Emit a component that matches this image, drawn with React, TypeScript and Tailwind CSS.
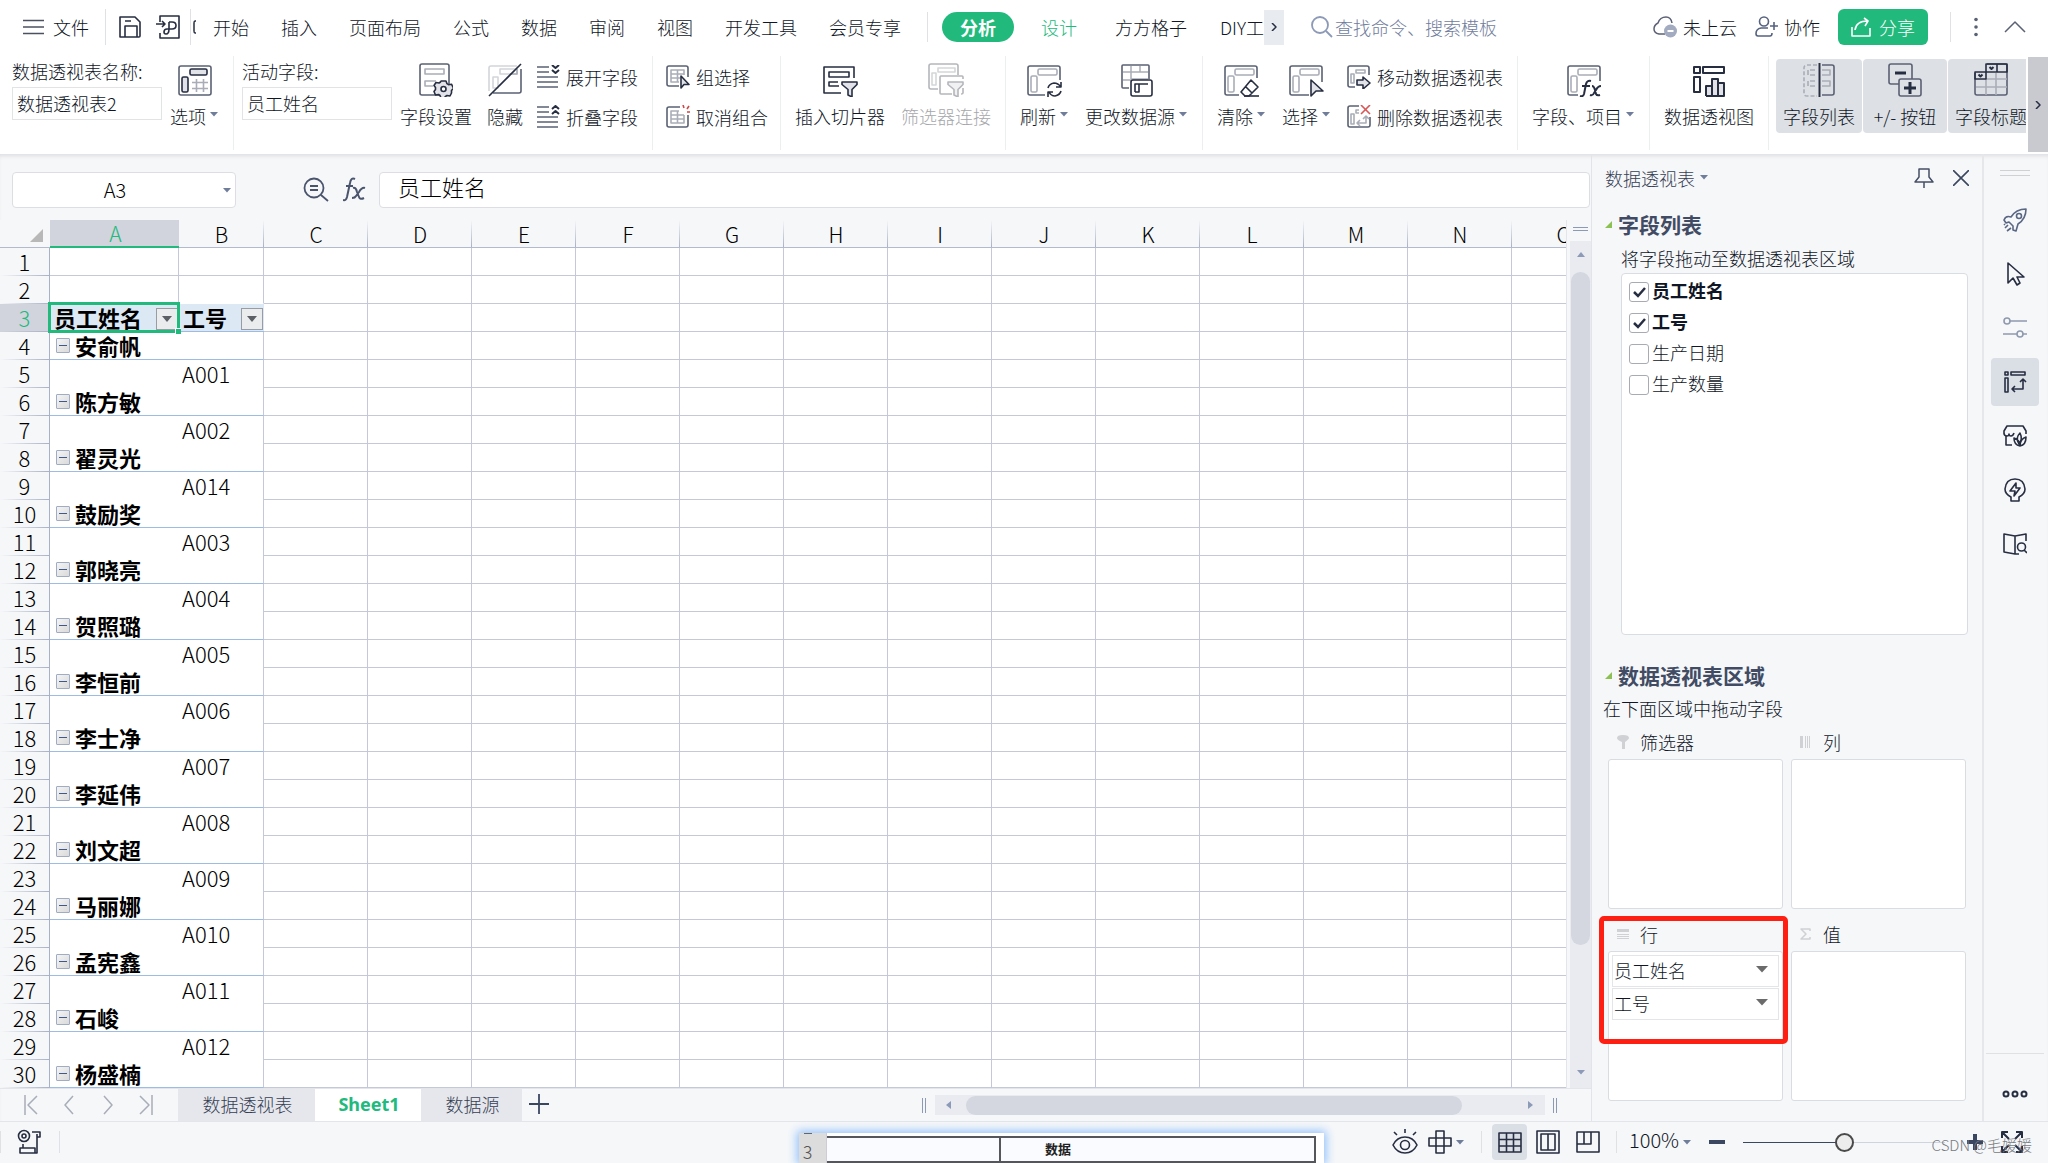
import React, { useState } from "react";

const DARK = "#272e42";
const MID = "#5b6174";
const LIGHT = "#aaadb7";
const FILL = "#e1e3e8";

type IconProps = { w?: number; h?: number; children: React.ReactNode; color?: string; sw?: number; className?: string };

function Icon({ w = 24, h = 24, children, color = DARK, sw = 1.6, className = "" }: IconProps) {
  return (
    <svg
      width={w}
      height={h}
      viewBox={`0 0 ${w} ${h}`}
      fill="none"
      stroke={color}
      strokeWidth={sw}
      strokeLinejoin="round"
      className={"shrink-0 " + className}
      aria-hidden="true"
    >
      {children}
    </svg>
  );
}

function Caret({ color = "#6f7d9b", className = "" }: { color?: string; className?: string }) {
  return (
    <svg width="8" height="5" viewBox="0 0 8 5" className={"shrink-0 " + className} aria-hidden="true">
      <path d="M0 0h8L4 4.5z" fill={color} />
    </svg>
  );
}

/* ---------- ribbon icons ---------- */

const icons = {
  options: (
    <Icon w={34} h={34}>
      <rect x="1" y="3" width="32" height="29" rx="2" stroke={MID} fill="#fff" />
      <rect x="12" y="6" width="17" height="6" rx="1.5" fill={FILL} />
      <rect x="4" y="14" width="6" height="15" rx="1.5" fill={FILL} />
      <path d="M18.500 16v13M25.500 16v13M14 19.500h16M14 25.500h16" stroke={LIGHT} />
    </Icon>
  ),
  fieldSettings: (
    <Icon w={34} h={34}>
      <rect x="1" y="1" width="29" height="31" rx="2" stroke={MID} fill="#fff" />
      <rect x="6" y="6" width="19" height="5" stroke={LIGHT} />
      <path d="M17 18H6v5h8" stroke={LIGHT} />
      <path
        d="M22 18h5l1 2.700 1.500 1 3-.5 2 4-2 2.300v1l0 1.500-1.500 3-3-.5-1.500 1-1.500 1.500h-3l-1-2.500-1.500-1-3 .5-1.500-3.500 1.500-2v-2l-1.500-2 2-3 3 .5 1.500-1z"
        fill={FILL}
      />
      <circle cx="24.500" cy="26" r="2.500" fill="#fff" />
    </Icon>
  ),
  hide: (
    <Icon w={34} h={34}>
      <path d="M1 28V5q0-2 2-2h26" stroke="#d3d5da" />
      <path d="M33 6v22q0 2-2 2H5" stroke={MID} />
      <rect x="12" y="6" width="17" height="5" stroke="#d3d5da" />
      <rect x="5" y="14" width="5" height="11" stroke="#d3d5da" />
      <path d="M22 11h7V6" stroke={LIGHT} />
      <path d="M1 33L33 1" />
    </Icon>
  ),
  expand: (
    <Icon>
      <path d="M1 2h12M1 7h12M1 12h21M1 17h21M1 22h21" stroke={MID} />
      <path d="M16 0l3.500 3L23 0M16 5l3.500 3L23 5" strokeWidth="2" />
    </Icon>
  ),
  collapse: (
    <Icon>
      <path d="M1 2h12M1 7h12M1 12h21M1 17h21M1 22h21" stroke={MID} />
      <path d="M16 4l3.500-3L23 4M16 9l3.500-3L23 9" strokeWidth="2" />
    </Icon>
  ),
  group: (
    <Icon>
      <path d="M13 21H3q-2 0-2-2V3q0-2 2-2h17q2 0 2 2v9" stroke={MID} />
      <path d="M13 17H5V5h13v5M5 9h13M5 13h9M11.500 5v12" stroke={LIGHT} />
      <path d="M15 11v12l3-3.500h5z" fill={FILL} />
    </Icon>
  ),
  ungroup: (
    <Icon>
      <path d="M14 2H3q-2 0-2 2v16q0 2 2 2h17q2 0 2-2V10" stroke={MID} />
      <path d="M13 6H5v12h13v-8M5 10h13M5 14h13M11.500 6v12" stroke={LIGHT} />
      <path d="M17 0l1 3M23 1l-2 3M21 7h3" stroke="#d04848" />
    </Icon>
  ),
  slicer: (
    <Icon w={36} h={34}>
      <path d="M19 30H2V4h30v11" />
      <rect x="7" y="9" width="20" height="5" />
      <path d="M16 19H7v4h10" />
      <path d="M20 19h15v2.500l-5 5V34l-4-2v-5.500l-6-5z" fill={FILL} />
    </Icon>
  ),
  filterLink: (
    <Icon w={36} h={34} color="#b4b6bb">
      <path d="M10 26H3q-2 0-2-2V3q0-2 2-2h25q2 0 2 2v9" />
      <rect x="10" y="5" width="17" height="4" stroke="#d5d6d9" />
      <rect x="4" y="10" width="4" height="12" stroke="#d5d6d9" />
      <path d="M24 31H13q-1 0-1-1V14q0-1 1-1h21q1 0 1 1v2M35 25v5q0 1-2 1" />
      <path d="M20 19h15v2.500l-5 5V34l-4-2v-5.500l-6-5z" fill="#f1f1f3" />
    </Icon>
  ),
  refresh: (
    <Icon w={36} h={34}>
      <path d="M18 32H3q-2 0-2-2V5q0-2 2-2h28q2 0 2 2v12" stroke={MID} />
      <rect x="11" y="6" width="19" height="6" rx="1.500" stroke={LIGHT} />
      <rect x="4" y="13" width="6" height="16" rx="1.500" stroke={LIGHT} />
      <path d="M21 25q1-4 6-5 4 0 7 4M34 19v5h-5M34 28q-1 4-6 5-4 0-6-4M21 34v-5h5" />
    </Icon>
  ),
  changeSource: (
    <Icon w={34} h={34}>
      <path d="M9 25H3q-1 0-1-1V3q0-1 1-1h25q1 0 1 1v13" stroke={MID} />
      <path d="M3 9h25M3 17h8M11 3v13M20 3v6M11 16h17" stroke={LIGHT} strokeWidth="1.500" />
      <rect x="11" y="17" width="21" height="16" rx="2" fill="#fff" />
      <path d="M15 29v-8h13M19 21v8h-4" />
    </Icon>
  ),
  clear: (
    <Icon w={36} h={34}>
      <path d="M15 32H3q-2 0-2-2V5q0-2 2-2h28q2 0 2 2v10" stroke={MID} />
      <rect x="11" y="6" width="19" height="6" rx="1.500" stroke={LIGHT} />
      <rect x="4" y="13" width="6" height="16" rx="1.500" stroke={LIGHT} />
      <path d="M27 17l7 7-9 9h-4l-4-4zM21 23l7 7" fill="#fff" />
      <path d="M20 33h15" />
    </Icon>
  ),
  select: (
    <Icon w={36} h={34}>
      <path d="M20 32H3q-2 0-2-2V5q0-2 2-2h28q2 0 2 2v14" stroke={MID} />
      <rect x="11" y="6" width="19" height="6" rx="1.500" stroke={LIGHT} />
      <rect x="4" y="13" width="6" height="16" rx="1.500" stroke={LIGHT} />
      <path d="M22 17v16l5-5h7z" fill={FILL} />
    </Icon>
  ),
  move: (
    <Icon>
      <path d="M8 22H3q-2 0-2-2V3q0-2 2-2h17q2 0 2 2v7" stroke={MID} />
      <path d="M9 5h9v3H9zM4 9h3v9H4z" stroke={LIGHT} />
      <path d="M10 15h6v-3l7 6-7 6v-4h-6z" fill={FILL} />
    </Icon>
  ),
  remove: (
    <Icon>
      <path d="M12 1H3q-2 0-2 2v17q0 2 2 2h18q2 0 2-2V12" stroke={MID} />
      <path d="M12 5H9v3h3M4 9h3v10H4z" stroke={LIGHT} />
      <path d="M19 12v6h-8M16 14l3-3 3 3M13 15l-3 3 3 3" stroke={LIGHT} />
      <path d="M14 0l9 9M23 0l-9 9" stroke="#d95757" />
    </Icon>
  ),
  fieldItems: (
    <Icon w={34} h={34}>
      <path d="M11 32H3q-2 0-2-2V5q0-2 2-2h28q2 0 2 2v13" stroke={MID} />
      <rect x="11" y="6" width="19" height="6" rx="1.500" stroke={LIGHT} />
      <rect x="4" y="13" width="6" height="16" rx="1.500" stroke={LIGHT} />
      <path
        d="M24 18q-4-1-5 3l-2 10q-1 3-4 2M15 23h8M25 23q2 0 3 4l1 4q1 2 4 1M34 23q-3 0-5 4l-2 3q-1 3-4 2"
        strokeWidth="2"
      />
    </Icon>
  ),
  pivotChart: (
    <Icon w={34} h={34} sw={2}>
      <rect x="2" y="4" width="6" height="6" />
      <rect x="11" y="4" width="21" height="6" />
      <rect x="2" y="14" width="6" height="15" />
      <path d="M14 33V23h6v10M20 33V16h6v17M26 33V20h6v13zM14 33h18" fill={FILL} />
    </Icon>
  ),
  fieldList: (
    <Icon w={34} h={34}>
      <path d="M15 2H5Q2 2 2 5v25q0 3 3 3h10" stroke={LIGHT} strokeDasharray="4 2" />
      <path d="M20 2h10q2 0 2 2v26q0 2-2 2H20" stroke={MID} />
      <path d="M13 7H6v5h7M13 18H6v5h7" stroke={LIGHT} strokeDasharray="5 2" />
      <path d="M20 7h8v5h-8M20 18h8v5h-8" stroke={LIGHT} />
      <path d="M17.500 0v34" strokeWidth="2" />
    </Icon>
  ),
  plusMinus: (
    <Icon w={34} h={34}>
      <rect x="1" y="1" width="23" height="20" rx="2" stroke={MID} />
      <path d="M7 10h11" strokeWidth="3" />
      <rect x="11" y="16" width="22" height="17" rx="2" stroke={MID} fill="#dde1e5" />
      <path d="M16 25h12M22 19v12" strokeWidth="3" />
    </Icon>
  ),
  fieldTitle: (
    <Icon w={34} h={34}>
      <path d="M1 10v20q0 2 2 2h28q2 0 2-2V3q0-2-2-2H13" stroke={MID} />
      <path d="M12 16v16M22 10v22M2 24h31M12 16h21" stroke={LIGHT} />
      <rect x="1" y="9" width="11" height="7" />
      <path d="M12 9V1h11v8zM23 1h10v8H23z" />
      <path d="M15.500 4l2 2 2-2M4.500 11.500l2 2 2-2" strokeWidth="2" />
    </Icon>
  ),
};

type IconName = keyof typeof icons;

function BigButton({
  icon,
  label,
  caret = false,
  disabled = false,
  active = false,
  wide = "",
}: {
  icon: IconName;
  label: string;
  caret?: boolean;
  disabled?: boolean;
  active?: boolean;
  wide?: string;
}) {
  return (
    <button
      type="button"
      disabled={disabled}
      aria-pressed={active || undefined}
      className={
        "flex shrink-0 flex-col items-center gap-[7px] whitespace-nowrap " +
        (active ? "mt-[3px] h-[74px] rounded bg-[#dde1e5] pt-1 " : "pt-[7px] ") +
        (disabled ? "text-[#a6a7ab] " : "") +
        wide
      }
    >
      {icons[icon]}
      <span className="flex h-6 items-center leading-6">
        {label}
        {caret && <Caret className="mr-px mb-1 ml-1" />}
      </span>
    </button>
  );
}

function SmallButton({ icon, label }: { icon: IconName; label: string }) {
  return (
    <button type="button" className="flex h-6 items-center gap-1.5 whitespace-nowrap leading-6">
      {icons[icon]}
      <span>{label}</span>
    </button>
  );
}

function Group({ children, className = "" }: { children: React.ReactNode; className?: string }) {
  return <div className={"flex shrink-0 items-start border-r border-[#eceef0] " + className}>{children}</div>;
}

function RibbonField({ id, label, value }: { id: string; label: string; value: string }) {
  return (
    <div className="flex w-[150px] flex-col gap-1 pt-[3px]">
      <label htmlFor={id} className="h-6 whitespace-nowrap leading-6">
        {label}
      </label>
      <input
        id={id}
        defaultValue={value}
        className="h-[33px] w-full border border-[#e1e3e5] bg-white px-1 pb-0.5 outline-none"
      />
    </div>
  );
}

/* ---------- top bar ---------- */

const tabs = ["开始", "插入", "页面布局", "公式", "数据", "审阅", "视图", "开发工具", "会员专享"];

function TopBar() {
  return (
    <header className="flex h-14 shrink-0 items-center bg-white pr-[22px] pb-0.5 pl-[23px]">
      <button type="button" className="flex items-center gap-2 whitespace-nowrap">
        <Icon w={22} h={18} color="#4b5160" sw={1.5}>
          <path d="M0 2.500h21M0 9h21M0 15.500h21" />
        </Icon>
        文件
      </button>
      <span className="ml-4 h-9 w-px bg-[#dfe1e5]" />
      <button type="button" aria-label="保存" className="ml-3">
        <Icon>
          <path d="M2 2h15l5 5v14q0 1-1 1H2z" />
          <path d="M7 22V11h12v11M7 6h6" />
        </Icon>
      </button>
      <button type="button" aria-label="输出为PDF" className="ml-3.5">
        <Icon>
          <path d="M4 7V1h19v22H4v-5M0 9h9M6 6l3 3-3 3M13 7v7M13 7h3q4 0 4 3.500t-4 3.500h-5q-3 0-3 3M8 17q0 2 2 2 3 0 3-5" />
        </Icon>
      </button>
      <span className="ml-2.5 h-9 w-px bg-[#dfe1e5]" />
      <Icon w={4} h={14} className="ml-px" sw={1.5}>
        <path d="M4 1H3Q2 1 2 3v8q0 2 1 2h1" />
      </Icon>
      <nav className="ml-[17px] flex items-center gap-8 whitespace-nowrap">
        {tabs.map((t) => (
          <button type="button" key={t}>
            {t}
          </button>
        ))}
      </nav>
      <span className="ml-[26px] h-[30px] w-px bg-[#dfe1e5]" />
      <button type="button" className="ml-3.5 h-[30px] w-[72px] shrink-0 rounded-full bg-[#21ba7c] leading-7 font-bold text-white">
        分析
      </button>
      <button type="button" className="ml-[27px] whitespace-nowrap text-[#21ba7c]">
        设计
      </button>
      <button type="button" className="ml-[38px] whitespace-nowrap">
        方方格子
      </button>
      <button type="button" className="ml-[33px] w-11 shrink-0 overflow-hidden text-left whitespace-nowrap">
        DIY工
      </button>
      <button type="button" aria-label="更多选项卡" className="flex h-[35px] w-5 shrink-0 items-center justify-center bg-[#e8ebf0]">
        <Icon w={6} h={8} sw={1.5}>
          <path d="M1 0l4 4-4 4" />
        </Icon>
      </button>
      <label className="ml-[27px] flex items-center gap-0.5">
        <Icon w={22} h={22} color="#8c9ab8" sw={1.8}>
          <circle cx="9" cy="9" r="8" />
          <path d="M15 15l6 6" />
        </Icon>
        <input
          aria-label="查找命令、搜索模板"
          placeholder="查找命令、搜索模板"
          className="w-[200px] outline-none placeholder:text-[#6f7c9c] placeholder:opacity-100"
        />
      </label>
      <div className="ml-auto flex items-center whitespace-nowrap">
        <button type="button" className="flex items-center gap-1.5">
          <Icon color={MID} sw={1.5}>
            <path d="M12 19H6q-5-1-5-5t4-6q2-6 8-6 5 0 6 6" />
            <circle cx="17.500" cy="16" r="6.500" fill="#a3abc0" stroke="none" />
            <path d="M14.500 16h6" stroke="#fff" strokeWidth="2" />
          </Icon>
          未上云
        </button>
        <button type="button" className="ml-[18px] flex items-center gap-[5px]">
          <Icon color="#56627f">
            <circle cx="9" cy="6.500" r="4.500" />
            <path d="M13 13H6q-5 1-5 5.500Q1 21 3 21h12q2 0 2-3M15 11h8M19 7v8" />
          </Icon>
          协作
        </button>
        <button
          type="button"
          className="ml-[18px] flex h-9 w-[90px] items-center justify-center gap-2 rounded-md bg-[#21ba7c] text-white"
        >
          <Icon w={20} h={20} color="#fff">
            <path d="M1 10v9h18v-8M4 13q1-9 13-9M13 1l4 3-3 5" />
          </Icon>
          分享
        </button>
        <span className="ml-[22px] h-[30px] w-px bg-[#dfe1e5]" />
        <button type="button" aria-label="更多" className="ml-[22px]">
          <svg width="6" height="20" viewBox="0 0 6 20" fill={MID} aria-hidden="true">
            <circle cx="3" cy="2.500" r="1.800" />
            <circle cx="3" cy="10" r="1.800" />
            <circle cx="3" cy="17.500" r="1.800" />
          </svg>
        </button>
        <button type="button" aria-label="收起功能区" className="ml-[25px]">
          <Icon w={22} h={12} color={MID} sw={1.5}>
            <path d="M1 11L11 1l10 10" />
          </Icon>
        </button>
      </div>
    </header>
  );
}

function Ribbon() {
  return (
    <div className="flex h-[98px] shrink-0 bg-white">
      <div className="mr-0.5 flex h-[94px] min-w-0 flex-1 overflow-hidden">
        <Group className="gap-2 pr-3.5 pl-3">
          <RibbonField id="pivot-name" label="数据透视表名称:" value="数据透视表2" />
          <BigButton icon="options" label="选项" caret />
        </Group>
        <Group className="gap-2 pr-3.5 pl-2">
          <RibbonField id="active-field" label="活动字段:" value="员工姓名" />
          <BigButton icon="fieldSettings" label="字段设置" />
          <BigButton icon="hide" label="隐藏" wide="ml-[7px]" />
          <div className="ml-[5px] flex flex-col gap-4 pt-[9px]">
            <SmallButton icon="expand" label="展开字段" />
            <SmallButton icon="collapse" label="折叠字段" />
          </div>
        </Group>
        <Group className="pr-3 pl-[13px]">
          <div className="flex flex-col gap-4 pt-[9px]">
            <SmallButton icon="group" label="组选择" />
            <SmallButton icon="ungroup" label="取消组合" />
          </div>
        </Group>
        <Group className="gap-4 px-3.5">
          <BigButton icon="slicer" label="插入切片器" />
          <BigButton icon="filterLink" label="筛选器连接" disabled />
        </Group>
        <Group className="gap-4 px-3.5">
          <BigButton icon="refresh" label="刷新" caret />
          <BigButton icon="changeSource" label="更改数据源" caret />
        </Group>
        <Group className="gap-4 px-3.5">
          <BigButton icon="clear" label="清除" caret />
          <BigButton icon="select" label="选择" caret />
          <div className="flex flex-col gap-4 pt-[9px]">
            <SmallButton icon="move" label="移动数据透视表" />
            <SmallButton icon="remove" label="删除数据透视表" />
          </div>
        </Group>
        <Group className="px-3.5">
          <BigButton icon="fieldItems" label="字段、项目" caret />
        </Group>
        <Group className="px-3.5">
          <BigButton icon="pivotChart" label="数据透视图" />
        </Group>
        <div className="flex shrink-0 items-start gap-px pl-[7px]">
          <BigButton icon="fieldList" label="字段列表" active wide="w-[86px]" />
          <BigButton icon="plusMinus" label="+/- 按钮" active wide="w-[84px]" />
          <BigButton icon="fieldTitle" label="字段标题" active wide="w-[86px]" />
        </div>
      </div>
      <button type="button" aria-label="向右滚动" className="mt-px flex h-[95px] w-5 shrink-0 items-center justify-center bg-[#c9cad0]">
        <Icon w={6} h={8} sw={1.5}>
          <path d="M1 0l4 4-4 4" />
        </Icon>
      </button>
    </div>
  );
}

/* ---------- sheet ---------- */

function FormulaBar() {
  return (
    <div className="flex h-16 shrink-0 items-start pt-[18px] pr-px pl-3">
      <div className="flex h-9 w-56 shrink-0 items-center rounded border border-[#dcdee3] bg-white pr-1">
        <input
          aria-label="名称框"
          defaultValue="A3"
          className="h-8 min-w-0 flex-1 pr-1.5 pb-px text-center text-xl text-black outline-none"
        />
        <Caret />
      </div>
      <button type="button" aria-label="查找" className="mt-[5px] ml-[67px]">
        <Icon w={26} h={26} color="#4a546c" sw={1.8}>
          <circle cx="11" cy="11" r="9.500" />
          <path d="M18 18l7 6M7 9h8M7 13h8" />
        </Icon>
      </button>
      <button type="button" aria-label="插入函数" className="mt-[5px] ml-3.5">
        <Icon w={24} h={26} color="#4a546c" sw={2}>
          <path d="M12 2Q8 0 7 6L4 20q-1 4-4 3M3 9h7M10 11q3-1 4 4l2 5q1 3 5 1M22 11q-3-1-6 4l-3 4q-1 2-4 2" />
        </Icon>
      </button>
      <input
        aria-label="编辑栏"
        defaultValue="员工姓名"
        className="ml-3 h-9 min-w-0 flex-1 rounded border border-[#dcdee3] bg-white pr-3 pb-2 pl-[18px] text-[22px] text-black outline-none"
      />
    </div>
  );
}

const names = ["安俞帆", "陈方敏", "翟灵光", "鼓励奖", "郭晓亮", "贺照璐", "李恒前", "李士净", "李延伟", "刘文超", "马丽娜", "孟宪鑫", "石峻", "杨盛楠"];
const codes = ["A001", "A002", "A014", "A003", "A004", "A005", "A006", "A007", "A008", "A009", "A010", "A011", "A012"];
const columns = ["A", "B", "C", "D", "E", "F", "G", "H", "I", "J", "K", "L", "M", "N", "O"];
const rest = columns.slice(2);

function FilterButton({ label }: { label: string }) {
  return (
    <button
      type="button"
      aria-label={label}
      className="mt-0.5 flex size-[22px] shrink-0 items-center justify-center border border-[#9a9ca3] bg-[#ebecee]"
    >
      <svg width="10" height="6" viewBox="0 0 10 6" aria-hidden="true">
        <path d="M0 0h10L5 6z" fill="#5c5f66" />
      </svg>
    </button>
  );
}

function CellsAB({ row }: { row: number }) {
  if (row < 3) {
    const bottom = row === 1 ? "border-b-[#c4c9da]" : "border-b-white";
    return (
      <>
        <td className={"border-r border-b border-r-[#c4c9da] " + bottom} />
        <td className={"border-r border-b border-r-[#c4c9da] " + bottom} />
      </>
    );
  }
  if (row === 3) {
    return (
      <>
        <td className="relative border-b border-[#9dbbe3] bg-[#dce9f5] p-0 pr-px pl-1">
          <div className="flex h-[27px] items-center justify-between font-bold text-black">
            <span className="text-[22px] leading-[27px]">员工姓名</span>
            <FilterButton label="筛选员工姓名" />
          </div>
          <div className="pointer-events-none absolute -top-[2px] -right-[1px] -bottom-[2px] -left-[2px] border-[3px] border-[#21ba7c]" />
          <div className="pointer-events-none absolute -right-[2px] -bottom-[3px] size-[6px] border-t border-l border-white bg-[#21ba7c]" />
        </td>
        <td className="border-b border-[#9dbbe3] bg-[#dce9f5] p-0 pr-px pl-1">
          <div className="flex h-[27px] items-center justify-between font-bold text-black">
            <span className="text-[22px] leading-[27px]">工号</span>
            <FilterButton label="筛选工号" />
          </div>
        </td>
      </>
    );
  }
  if (row % 2 === 0) {
    const name = names[(row - 4) / 2];
    return (
      <>
        <td className="border-b border-[#9dbbe3] p-0 pl-1.5">
          <div className="flex h-[27px] items-center gap-[5px]">
            <button
              type="button"
              aria-label={"折叠" + name}
              className="flex h-[15px] w-3.5 items-center justify-center rounded-[1px] border border-[#a0abc4] bg-linear-to-br from-[#f4f4f4] to-[#dadada]"
            >
              <span className="h-px w-2 bg-[#3f5a8a]" />
            </button>
            <span className="pb-px text-[22px] leading-[26px] font-bold text-black">{name}</span>
          </div>
        </td>
        <td className="border-r border-b border-r-[#c4c9da] border-b-[#9dbbe3]" />
      </>
    );
  }
  return (
    <>
      <td />
      <td className="border-r border-[#c4c9da] p-0 pb-0.5 pl-[3px] text-[22px] leading-[26px] text-black">{codes[(row - 5) / 2]}</td>
    </>
  );
}

function Grid() {
  return (
    <table className="w-[1616px] table-fixed border-separate border-spacing-0 bg-white font-light">
      <colgroup>
        <col className="w-[50px]" />
        <col className="w-[129px]" />
        <col className="w-[85px]" />
        {rest.map((c) => (
          <col key={c} className="w-[104px]" />
        ))}
      </colgroup>
      <thead>
        <tr className="h-7">
          <th className="border-b border-[#b3bacd] bg-[#f6f7f9] p-0">
            <svg width="14" height="14" viewBox="0 0 14 14" className="mt-1 ml-[30px]" aria-hidden="true">
              <path d="M13 0v13H0z" fill="#b8b8b8" />
            </svg>
          </th>
          {columns.map((c) => (
            <th
              key={c}
              scope="col"
              className={
                "p-0 pt-px text-[21px] font-light " +
                (c === "A"
                  ? "border-b-2 border-[#21ba7c] bg-[#d1d4dc] pl-0.5 leading-[25px] text-[#21ba7c]"
                  : "border-b border-[#b3bacd] bg-[#f6f7f9] bg-[linear-gradient(to_bottom,transparent,#a9b1c8)] bg-[length:1px_100%] bg-right bg-no-repeat leading-[26px] text-black")
              }
            >
              {c}
            </th>
          ))}
        </tr>
      </thead>
      <tbody>
        {Array.from({ length: 30 }, (_, i) => i + 1).map((r) => (
          <tr key={r} className="h-7">
            <th
              scope="row"
              className={
                "h-7 border-r border-[#a9b1c8] bg-[linear-gradient(to_right,transparent,#a9b1c8)] bg-[length:100%_1px] bg-bottom bg-no-repeat p-0 pb-0.5 text-[22px] leading-[26px] font-light " +
                (r === 3 ? "bg-[#d1d4dc] text-[#21ba7c]" : "bg-[#f6f7f9] text-black")
              }
            >
              {r}
            </th>
            <CellsAB row={r} />
            {rest.map((c) => (
              <td key={c} className="border-r border-b border-[#c4c9da]" />
            ))}
          </tr>
        ))}
      </tbody>
    </table>
  );
}

function VerticalScroll() {
  return (
    <div className="mt-0.5 flex w-[25px] shrink-0 flex-col border-l border-[#e3e5ea] pl-[3px]">
      <div className="flex h-[21px] shrink-0 items-center justify-center">
        <span className="mb-1 h-1 w-[15px] border-y border-[#8c9ab8]" />
      </div>
      <div className="flex flex-1 flex-col bg-[#e9ebf0]">
        <div className="flex h-[31px] shrink-0 items-start justify-center pt-[11px]">
          <svg width="8" height="5" viewBox="0 0 8 5" aria-hidden="true">
            <path d="M0 5h8L4 0z" fill="#8c9ab8" />
          </svg>
        </div>
        <div className="mx-px grow-6 rounded-full bg-[#d4d7df]" />
        <div className="grow" />
        <div className="flex h-[31px] shrink-0 items-center justify-center">
          <Caret color="#8c9ab8" />
        </div>
      </div>
    </div>
  );
}

function SheetBar() {
  return (
    <div className="flex h-[33px] shrink-0 items-stretch border-t border-[#e3e5ea] text-[#363f55]">
      <div className="flex w-[178px] shrink-0 items-center pb-px pl-6">
        <Icon w={14} h={20} color="#a9adb8" sw={1.5}>
          <path d="M1 0v20M13 1L4 10l9 9" />
        </Icon>
        <Icon w={10} h={20} color="#a9adb8" sw={1.5} className="ml-[26px]">
          <path d="M9 1L1 10l8 9" />
        </Icon>
        <Icon w={10} h={20} color="#a9adb8" sw={1.5} className="ml-[29px]">
          <path d="M1 1l8 9-8 9" />
        </Icon>
        <Icon w={14} h={20} color="#a9adb8" sw={1.5} className="ml-[26px]">
          <path d="M1 1l9 9-9 9M13 0v20" />
        </Icon>
      </div>
      <button type="button" className="w-[137px] bg-[#e6e7ec] pb-0.5 pl-0.5">
        数据透视表
      </button>
      <button
        type="button"
        className="w-[106px] bg-white pb-0.5 pl-0.5 font-['Noto_Sans','Noto_Sans_CJK_SC',sans-serif] font-bold text-[#21ba7c]"
      >
        Sheet1
      </button>
      <button type="button" className="w-[101px] bg-[#e6e7ec] pb-0.5 pl-0.5">
        数据源
      </button>
      <button type="button" aria-label="新建工作表" className="ml-[7px] pb-0.5">
        <Icon w={20} h={20} color="#3b4660" sw={1.8}>
          <path d="M10 0v20M0 10h20" />
        </Icon>
      </button>
      <div className="ml-auto flex items-center pr-[34px]">
        <span className="h-[15px] w-1 border-x border-[#8c9ab8]" />
        <div className="ml-[9px] flex h-5 w-[610px] items-center bg-[#e9ebf0]">
          <svg width="5" height="8" viewBox="0 0 5 8" className="ml-[11px] shrink-0" aria-hidden="true">
            <path d="M5 0v8L0 4z" fill="#8c9ab8" />
          </svg>
          <div className="ml-[15px] h-[19px] w-[496px] rounded-full bg-[#d4d7df]" />
          <svg width="5" height="8" viewBox="0 0 5 8" className="mr-3 ml-auto shrink-0" aria-hidden="true">
            <path d="M0 0v8l5-4z" fill="#8c9ab8" />
          </svg>
        </div>
        <span className="ml-2 h-[15px] w-1 border-x border-[#8c9ab8]" />
      </div>
    </div>
  );
}

/* ---------- pivot panel ---------- */

function SectionTitle({ children }: { children: React.ReactNode }) {
  return (
    <h2 className="flex h-7 items-center gap-1.5 pb-1 pl-[13px] text-[21px] leading-6 font-bold text-[#414c64]">
      <svg width="7" height="7" viewBox="0 0 7 7" aria-hidden="true">
        <path d="M7 0v7H0z" fill="#8cc152" />
      </svg>
      {children}
    </h2>
  );
}

function FieldCheck({ label, initial }: { label: string; initial: boolean }) {
  const [on, setOn] = useState(initial);
  return (
    <label className={"flex items-center gap-[3px] " + (on ? "font-bold" : "")}>
      <span className="relative flex size-5">
        <input
          type="checkbox"
          checked={on}
          onChange={(e) => setOn(e.target.checked)}
          className="size-5 appearance-none rounded-[3px] border border-[#a9abb3] bg-white"
        />
        {on && (
          <svg width="20" height="20" viewBox="0 0 20 20" className="pointer-events-none absolute inset-0" fill="none" aria-hidden="true">
            <path d="M5 10l4 4 7-8" stroke={DARK} strokeWidth="2.500" />
          </svg>
        )}
      </span>
      <span className="pb-0.5 leading-[29px]">{label}</span>
    </label>
  );
}

function Area({ icon, title, children }: { icon: React.ReactNode; title: string; children?: React.ReactNode }) {
  return (
    <div>
      <div className="mb-1.5 flex h-[22px] items-center gap-[11px] pl-[9px] leading-[22px]">
        {icon}
        {title}
      </div>
      <div className="flex h-[150px] flex-col gap-px rounded-[3px] border border-[#d9dce1] bg-white p-[3px]">{children}</div>
    </div>
  );
}

function RowField({ label }: { label: string }) {
  return (
    <div className="relative h-8">
      <select
        aria-label={label}
        className="h-8 w-full appearance-none border border-[#e3e5e9] bg-white pr-4 pb-[3px] pl-px outline-none"
      >
        <option>{label}</option>
      </select>
      <svg width="12" height="7" viewBox="0 0 12 7" className="pointer-events-none absolute top-[11px] right-[11px]" aria-hidden="true">
        <path d="M0 0h12L6 6.500z" fill="#6b6b6b" />
      </svg>
    </div>
  );
}

function PivotPanel() {
  return (
    <aside className="flex w-[393px] shrink-0 flex-col border-r-2 border-l border-r-[#e5e7eb] border-l-[#e1e4e9]">
      <div className="flex h-12 items-center pr-[13px] pl-[13px] text-[#363f55]">
        <button type="button" className="flex items-center gap-1">
          数据透视表
          <Caret className="mb-0.5 ml-px" />
        </button>
        <button type="button" aria-label="固定" className="ml-auto">
          <Icon w={20} h={20} color="#444f66" sw={1.5}>
            <path d="M5 1h10v8l4 5H1l4-5zM10 14v6" />
          </Icon>
        </button>
        <button type="button" aria-label="关闭" className="ml-[19px]">
          <Icon w={16} h={16} color="#3b4660">
            <path d="M0 0l16 16M16 0L0 16" />
          </Icon>
        </button>
      </div>
      <div className="mt-2.5 flex min-h-0 flex-1 flex-col">
        <SectionTitle>字段列表</SectionTitle>
        <p className="mt-1.5 h-6 pl-[29px] leading-6">将字段拖动至数据透视表区域</p>
        <div className="mt-[3px] mr-3.5 ml-[29px] flex-1 rounded border border-[#d9dce1] bg-white pt-0.5 pl-[7px]">
          <FieldCheck label="员工姓名" initial={true} />
          <FieldCheck label="工号" initial={true} />
          <FieldCheck label="生产日期" initial={false} />
          <FieldCheck label="生产数量" initial={false} />
        </div>
      </div>
      <div className="mt-7">
        <SectionTitle>数据透视表区域</SectionTitle>
        <p className="mt-[5px] h-6 pl-[11px] leading-6">在下面区域中拖动字段</p>
        <div className="mt-[11px] grid grid-cols-2 gap-x-2 gap-y-3.5 px-4 pb-5">
          <Area
            title="筛选器"
            icon={
              <svg width="12" height="14" viewBox="0 0 12 14" aria-hidden="true">
                <path d="M0 3q0-3 6-3t6 3q0 1-4 4v7H5V7Q0 5 0 3z" fill="#d0d1d4" />
              </svg>
            }
          />
          <Area
            title="列"
            icon={
              <svg width="12" height="12" viewBox="0 0 12 12" aria-hidden="true">
                <path d="M0 0h3v12H0zM5 0h1v12H5zM7 0h1v12H7zM9 0h1v12H9z" fill="#d0d1d4" />
              </svg>
            }
          />
          <div className="relative">
            <Area
              title="行"
              icon={
                <svg width="12" height="10" viewBox="0 0 12 10" aria-hidden="true">
                  <path d="M0 0h12v3H0zM0 5h12v1H0zM0 7h12v1H0zM0 9h12v1H0z" fill="#d0d1d4" />
                </svg>
              }
            >
              <RowField label="员工姓名" />
              <RowField label="工号" />
            </Area>
            <div className="pointer-events-none absolute -top-[7px] -left-[9px] h-32 w-[189px] rounded-[5px] border-[5px] border-[#ff1f12]" />
          </div>
          <Area
            title="值"
            icon={
              <Icon w={12} h={12} color="#d0d1d4" sw={1.5}>
                <path d="M10 3V1H1l5 5-5 5h9V9" />
              </Icon>
            }
          />
        </div>
      </div>
    </aside>
  );
}

const stripIcons: { label: string; active?: boolean; icon: React.ReactNode }[] = [
  {
    label: "快捷",
    icon: (
      <Icon color="#5a6784">
        <path d="M8 9Q13 1 23 1q0 10-8 15l-2 7-3-1v-4l-4-4-3 1-2-3q2-5 7-3z" />
        <circle cx="16" cy="8" r="2.500" />
        <path d="M5 17l-3 3M8 20l-4 3M2 16l-1 1" />
      </Icon>
    ),
  },
  {
    label: "选择",
    icon: (
      <Icon>
        <path d="M5 1v20l5-5 4 7 3-2-3-6h7z" />
      </Icon>
    ),
  },
  {
    label: "属性",
    icon: (
      <Icon color="#8f99ae">
        <circle cx="4" cy="5" r="3" />
        <path d="M7 5h17M0 18h14M20 18h4" />
        <circle cx="17" cy="18" r="3" />
      </Icon>
    ),
  },
  {
    label: "数据透视表",
    active: true,
    icon: (
      <Icon>
        <rect x="2" y="2" width="3" height="3" />
        <rect x="8" y="2" width="14" height="3" />
        <rect x="2" y="8" width="3" height="14" />
        <path d="M20 9v10H9M17 12l3-3 3 3M12 16l-3 3 3 3" />
      </Icon>
    ),
  },
  {
    label: "素材",
    icon: (
      <Icon>
        <path d="M9 21H3v-9M1 10V7l3-5h16l3 5v3M1 9q0 3 3 3 2 0 2-2 0 2 2 2t3-3" />
        <path d="M17 9q-5 5-1 11 4-5 1-11zM11 14q0 7 6 8 0-6-6-8zM23 13q-6 2-6 9 6-1 6-9z" />
      </Icon>
    ),
  },
  {
    label: "智能",
    icon: (
      <Icon>
        <path d="M8 23v-4Q2 16 2 11 3 1 12 1t10 10q0 5-6 8v4z" />
        <path d="M13 5l-6 8h5l-1 5 6-8h-4z" />
      </Icon>
    ),
  },
  {
    label: "帮助",
    icon: (
      <Icon>
        <path d="M12 4L1 2v18l11 2h4M12 4v18M12 4l11-2v7" />
        <circle cx="18.500" cy="15" r="4" />
        <path d="M21 18l3 3" />
      </Icon>
    ),
  },
];

function Strip() {
  return (
    <aside className="flex w-16 shrink-0 flex-col items-center pr-0.5">
      <div className="mt-4 h-1.5 w-7.5 shrink-0 border-y border-[#cfd1d4]" />
      <div className="mt-5 flex flex-col gap-1.5">
        {stripIcons.map((s) => (
          <button
            type="button"
            key={s.label}
            aria-label={s.label}
            className={"flex size-12 items-center justify-center rounded " + (s.active ? "bg-[#dadee5]" : "")}
          >
            {s.icon}
          </button>
        ))}
      </div>
      <div className="mt-auto h-px w-[58px] shrink-0 bg-[#dfe1e5]" />
      <button type="button" aria-label="更多" className="flex h-[67px] items-center pt-3">
        <Icon w={26} h={8} sw={2}>
          <circle cx="4" cy="4" r="2.500" />
          <circle cx="13" cy="4" r="2.500" />
          <circle cx="22" cy="4" r="2.500" />
        </Icon>
      </button>
    </aside>
  );
}

/* ---------- status bar ---------- */

function StatusBar() {
  return (
    <footer className="relative flex h-[42px] shrink-0 items-center border-t border-[#e3e5ea] pb-px">
      <span className="h-[22px] w-px bg-[#dfe1e5]" />
      <button type="button" aria-label="录制宏" className="ml-4">
        <Icon w={26} h={26}>
          <circle cx="7" cy="7" r="5.500" />
          <circle cx="7" cy="7" r="2" />
          <path d="M15 3h8v5h-3M20 5v19H3v-5h15v5M6 15v4" />
        </Icon>
      </button>
      <span className="ml-4 h-[22px] w-px bg-[#dfe1e5]" />

      <div className="absolute bottom-0 left-[799px] flex h-[30px] w-[525px] bg-white shadow-[0_0_9px_2px_#8fc0fb]">
        <div className="flex w-7 flex-col items-center border-r border-[#d0cdd2] bg-[#dcdcdc] pr-2.5">
          <span className="h-px w-2 bg-[#666666]" />
          <span className="mt-1.5 text-lg leading-[22px] font-light text-[#555555]">3</span>
        </div>
        <div className="mt-[3px] mr-2 flex flex-1 border-y-2 border-r-2 border-[#55565c] bg-[#f9fbfe]">
          <div className="w-[174px] border-r-2 border-[#55565c]" />
          <div className="pl-11 text-[13px] leading-[22px] font-bold text-[#222222]">数据</div>
        </div>
      </div>

      <div className="ml-auto flex items-center pr-[25px]">
        <button type="button" aria-label="护眼模式">
          <Icon w={26} h={26}>
            <path d="M1 16q4-8 12-8t12 8q-4 8-12 8T1 16z" />
            <circle cx="13" cy="16" r="4.500" />
            <path d="M13 0v4M2 3l3 3M24 3l-3 3" />
          </Icon>
        </button>
        <button type="button" aria-label="阅读模式" className="ml-2.5 flex items-center gap-1">
          <Icon w={24} h={24}>
            <path d="M8 1h8v22H8zM1 8h22v8H1z" />
          </Icon>
          <Caret />
        </button>
        <span className="ml-[17px] h-[22px] w-px bg-[#dfe1e5]" />
        <button type="button" aria-label="普通视图" className="ml-2.5 flex h-9 w-[35px] items-center justify-center rounded bg-[#dadee5]">
          <Icon>
            <path d="M1 3h22v19H1zM1 9.500h22M1 16h22M8.500 3v19M15.500 3v19" />
          </Icon>
        </button>
        <button type="button" aria-label="分页预览" className="ml-[9px]">
          <Icon w={24} h={24}>
            <path d="M1 1h22v22H1z" />
            <path d="M5 4h14v16H5zM12 4v16" />
          </Icon>
        </button>
        <button type="button" aria-label="页面布局" className="ml-4">
          <Icon w={24} h={24}>
            <path d="M1 2h22v20H1zM8 2v12M1 14h14V2" />
          </Icon>
        </button>
        <span className="ml-4 h-[22px] w-px bg-[#dfe1e5]" />
        <div className="relative ml-3 flex w-[66px] items-center">
          <select aria-label="缩放比例" className="w-full appearance-none pb-1 text-xl font-light outline-none">
            <option>100%</option>
          </select>
          <Caret className="pointer-events-none absolute right-1" />
        </div>
        <button type="button" aria-label="缩小" className="ml-[14px]">
          <Icon w={16} h={16} color="#3b4660">
            <path d="M0 8h16" strokeWidth="4" />
          </Icon>
        </button>
        <input
          type="range"
          aria-label="缩放"
          min={10}
          max={190}
          defaultValue={100}
          className="ml-[18px] h-5 w-[202px] appearance-none bg-[linear-gradient(to_right,#3b4660_50%,#d0d4de_50%)] bg-[length:100%_1px] bg-center bg-no-repeat [&::-webkit-slider-thumb]:size-[19px] [&::-webkit-slider-thumb]:appearance-none [&::-webkit-slider-thumb]:rounded-full [&::-webkit-slider-thumb]:border-2 [&::-webkit-slider-thumb]:border-[#4a4a4a] [&::-webkit-slider-thumb]:bg-[#ededed]"
        />
        <button type="button" aria-label="放大" className="ml-[22px]">
          <Icon w={16} h={16} color="#3b4660">
            <path d="M0 8h16M8 0v16" strokeWidth="4" />
          </Icon>
        </button>
        <button type="button" aria-label="全屏" className="ml-[18px]">
          <Icon w={22} h={22} sw={2}>
            <path d="M1 7V1h6M15 1h6v6M21 15v6h-6M7 21H1v-6M1 1l7 7M21 1l-7 7M21 21l-7-7M1 21l7-7" />
          </Icon>
        </button>
      </div>
      <span className="pointer-events-none absolute right-4 bottom-1.5 text-[15px] leading-6 font-light text-[#777b82]">
        CSDN @毛媛媛
      </span>
    </footer>
  );
}

export default function App() {
  return (
    <div className="flex h-screen flex-col overflow-hidden bg-[#f6f7f9] font-['Noto_Sans_CJK_SC','Noto_Sans',sans-serif] text-lg leading-6 font-light text-[#0f1626]">
      <TopBar />
      <Ribbon />
      <div className="flex min-h-0 flex-1 shadow-[inset_0_4px_4px_-2px_#dcdee1]">
        <main className="flex min-w-0 flex-1 flex-col">
          <FormulaBar />
          <div className="flex min-h-0 flex-1">
            <div className="min-w-0 flex-1 overflow-hidden pt-0.5">
              <Grid />
            </div>
            <VerticalScroll />
          </div>
          <SheetBar />
        </main>
        <PivotPanel />
        <Strip />
      </div>
      <StatusBar />
    </div>
  );
}
